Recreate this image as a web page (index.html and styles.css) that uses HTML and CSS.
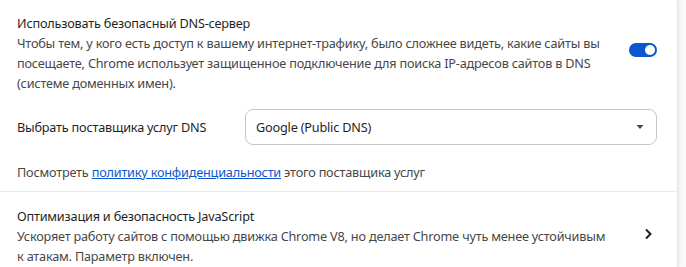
FILE: index.html
```html
<!DOCTYPE html>
<html lang="ru">
<head>
<meta charset="utf-8">
<link rel="stylesheet" href="styles.css">
</head>
<body>
<div class="page">
  <div class="card">
    <div class="row toggle-row">
      <div class="text">
        <div class="title">Использовать безопасный DNS-сервер</div>
        <div class="desc">Чтобы тем, у кого есть доступ к вашему интернет-трафику, было сложнее видеть, какие сайты вы посещаете, Chrome использует защищенное подключение для поиска IP-адресов сайтов в DNS (системе доменных имен).</div>
      </div>
      <div class="toggle"><span class="knob"></span></div>
    </div>
    <div class="select-row">
      <div class="label">Выбрать поставщика услуг DNS</div>
      <div class="select">
        <span>Google (Public DNS)</span>
        <svg class="arrow" width="10" height="6" viewBox="0 0 10 6"><path d="M1.5 1h7L5 5z" fill="#474747"/></svg>
      </div>
    </div>
    <div class="policy">Посмотреть <a href="#">политику конфиденциальности</a> этого поставщика услуг</div>
    <div class="row link-row">
      <div class="text">
        <div class="title">Оптимизация и безопасность JavaScript</div>
        <div class="desc">Ускоряет работу сайтов с помощью движка Chrome V8, но делает Chrome чуть менее устойчивым к атакам. Параметр включен.</div>
      </div>
      <div class="chevron">
        <svg width="20" height="20" viewBox="0 0 20 20"><path d="M8 5.5 12.5 10 8 14.5" fill="none" stroke="#1f1f1f" stroke-width="2"/></svg>
      </div>
    </div>
  </div>
</div>
</body>
</html>
```
FILE: styles.css
```css
html, body {
  margin: 0;
  padding: 0;
  background: #f8f9fa;
}
body {
  font-family: "Noto Sans", "Open Sans", sans-serif;
  font-size: 12.7px;
  letter-spacing: -0.2px;
  line-height: 20px;
  color: #1f1f1f;
}
.page {
  width: 686px;
  height: 267px;
  overflow: hidden;
}
.card {
  width: 677px;
  background: #fff;
  border-right: 1px solid #e6e6e6;
  box-shadow: 1px 0 4px rgba(0,0,0,0.08);
  min-height: 267px;
}
.row {
  display: flex;
  align-items: center;
}
.text {
  flex: 1;
}
.title {
  color: #1f1f1f;
}
.desc {
  color: #474747;
}
.toggle-row {
  padding: 13px 20px 6px 17px;
}
.toggle-row .text {
  padding-right: 18px;
}
.toggle {
  width: 28px;
  height: 14px;
  border-radius: 7px;
  background: #0b57d0;
  position: relative;
  flex: none;
  margin-top: -7px;
}
.knob {
  position: absolute;
  right: 2px;
  top: 2px;
  width: 10px;
  height: 10px;
  border-radius: 50%;
  background: #fff;
}
.select-row {
  display: flex;
  align-items: center;
  padding: 10px 20px 0 17px;
}
.label {
  width: 228px;
  color: #1f1f1f;
}
.select {
  width: 412px;
  height: 36px;
  box-sizing: border-box;
  border: 1px solid #c7c7c7;
  border-radius: 8px;
  display: flex;
  align-items: center;
  justify-content: space-between;
  padding: 0 11px 0 10px;
  color: #1f1f1f;
}
.arrow {
  display: block;
}
.policy {
  padding: 17px 17px 9px;
  color: #474747;
  border-bottom: 1px solid #e9e9e9;
}
.policy a {
  color: #0b57d0;
  text-decoration: underline;
}
.link-row {
  padding: 14px 19px 0 17px;
}
.link-row .text {
  padding-right: 30px;
}
.chevron {
  width: 20px;
  height: 20px;
  flex: none;
  margin-top: -4px;
}
.chevron svg {
  display: block;
}
```
